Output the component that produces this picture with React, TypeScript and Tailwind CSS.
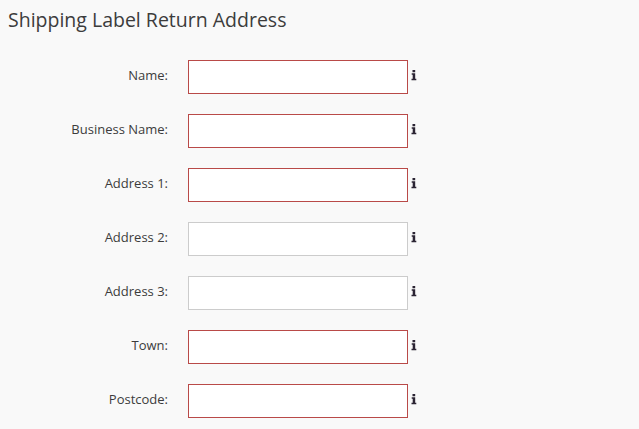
type Field = {
    label: string;
    invalid: boolean;
};

const fields: Field[] = [
    { label: "Name:", invalid: true },
    { label: "Business Name:", invalid: true },
    { label: "Address 1:", invalid: true },
    { label: "Address 2:", invalid: false },
    { label: "Address 3:", invalid: false },
    { label: "Town:", invalid: true },
    { label: "Postcode:", invalid: true },
];

const InfoIcon = () => (
    <svg viewBox="0 0 6 11" className="ml-[3px] mt-[10px] h-[11px] w-[6px]" fill="#2b2433">
        <path d="M1.5 0h2.7v2.2H1.5zM.7 3.3h3.5v5.5h1.1v1.4H.5V8.8h1.2v-4h-1z" />
    </svg>
);

const FieldRow = ({ label, invalid }: Field) => {
    return (
        <label className="flex h-[34px] items-start">
            <span className="w-[168px] pt-[5px] text-right text-[13px] leading-5 text-[#3c3c3c]">{label}</span>
            <input
                type="text"
                className={`ml-5 h-[34px] w-[220px] border bg-white px-3 outline-none ${invalid ? "border-[#b94a48]" : "border-[#cccccc]"}`}
            />
            <InfoIcon />
        </label>
    );
};

export default function App() {
    return (
        <div className="h-[429px] w-[639px] overflow-hidden bg-[#f9f9f9] font-['Open_Sans',sans-serif] text-[#333333]">
            <h3 className="pl-2 pt-[5px] text-[19.5px] font-normal leading-[30px] text-[#3c3c3c]">Shipping Label Return Address</h3>
            <div className="mt-[25px] flex flex-col gap-5">
                {fields.map((field) => (
                    <FieldRow key={field.label} {...field} />
                ))}
            </div>
        </div>
    );
}
